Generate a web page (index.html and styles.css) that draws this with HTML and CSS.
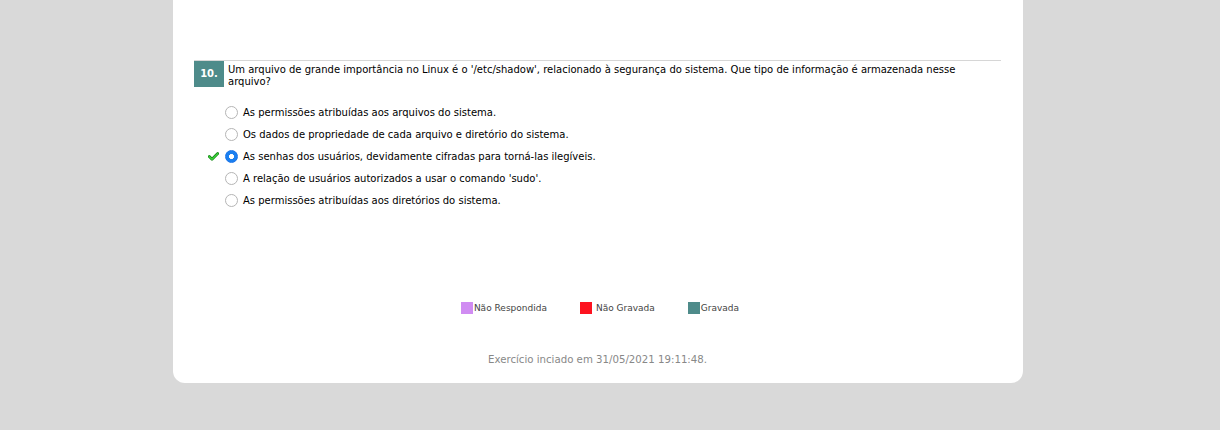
FILE: index.html
```html
<!DOCTYPE html>
<html lang="pt">
<head>
<meta charset="utf-8">
<link rel="stylesheet" href="styles.css">
</head>
<body>
<div class="card">
  <div class="question">
    <div class="q-head">
      <span class="q-num">10.</span>
      <p class="q-text">Um arquivo de grande importância no Linux é o '/etc/shadow', relacionado à segurança do sistema. Que tipo de informação é armazenada nesse arquivo?</p>
    </div>
    <ul class="options">
      <li class="opt"><span class="mark"></span><span class="radio"></span><span>As permissões atribuídas aos arquivos do sistema.</span></li>
      <li class="opt"><span class="mark"></span><span class="radio"></span><span>Os dados de propriedade de cada arquivo e diretório do sistema.</span></li>
      <li class="opt"><span class="mark"><svg width="11" height="9" viewBox="0 0 11 9"><path d="M1.3 4.6 L4 7.3 L9.7 1.6" fill="none" stroke="#178a17" stroke-width="2.8" stroke-linejoin="round" stroke-linecap="round"/><path d="M1.3 4.6 L4 7.3 L9.7 1.6" fill="none" stroke="#3fdc3f" stroke-width="1.2" stroke-linejoin="round" stroke-linecap="round"/></svg></span><span class="radio checked"></span><span>As senhas dos usuários, devidamente cifradas para torná-las ilegíveis.</span></li>
      <li class="opt"><span class="mark"></span><span class="radio"></span><span>A relação de usuários autorizados a usar o comando 'sudo'.</span></li>
      <li class="opt"><span class="mark"></span><span class="radio"></span><span>As permissões atribuídas aos diretórios do sistema.</span></li>
    </ul>
  </div>
  <div class="legend">
    <span class="leg"><span class="sw purple"></span>Não Respondida</span>
    <span class="leg"><span class="sw red"></span><span class="gap">Não Gravada</span></span>
    <span class="leg"><span class="sw teal"></span>Gravada</span>
  </div>
  <p class="footer">Exercício inciado em 31/05/2021 19:11:48.</p>
</div>
</body>
</html>
```
FILE: styles.css
```css
html, body {
  margin: 0;
  padding: 0;
  background: #d9d9d9;
  height: 430px;
  overflow: hidden;
}
body {
  font-family: "DejaVu Sans", Verdana, sans-serif;
}
.card {
  width: 850px;
  margin: 0 0 0 173px;
  height: 383px;
  background: #fff;
  border-radius: 0 0 12px 12px;
  padding: 60px 22px 0 21px;
  box-sizing: border-box;
}
.question {
  border-top: 1px solid #d6d6d6;
}
.q-head {
  display: flex;
  align-items: flex-start;
}
.q-num {
  flex: none;
  width: 30px;
  height: 26px;
  background: #4e8b8a;
  color: #fff;
  font-weight: bold;
  font-size: 10px;
  line-height: 26px;
  text-align: center;
}
.q-text {
  margin: 3px 0 0 4px;
  font-size: 10px;
  line-height: 12px;
  color: #000;
}
.options {
  list-style: none;
  margin: 13px 0 0 0;
  padding: 0;
}
.opt {
  display: flex;
  align-items: center;
  height: 22px;
  font-size: 10px;
  color: #000;
}
.mark {
  width: 18px;
  margin-left: 13px;
  display: flex;
  align-items: center;
  padding-left: 1px;
  box-sizing: border-box;
}
.radio {
  width: 11px;
  height: 11px;
  border: 1px solid #b5b5b5;
  border-radius: 50%;
  background: #fff;
  margin-right: 5px;
  box-sizing: content-box;
  flex: none;
}
.radio.checked {
  border: 1px solid #1a73e8;
  background: radial-gradient(circle, #fff 0 2.2px, #1a7ff0 2.8px);
}
.legend {
  display: flex;
  justify-content: center;
  margin-top: 91px;
  margin-left: 5px;
  font-size: 9px;
  color: #444;
  gap: 33px;
}
.leg {
  display: flex;
  align-items: center;
}
.sw {
  width: 12px;
  height: 12px;
  margin-right: 1px;
}
.gap { margin-left: 3px; }
.purple { background: #d08cf2; }
.red { background: #fd1320; }
.teal { background: #4e8b8a; }
.footer {
  margin: 40px 0 0 0;
  text-align: center;
  font-size: 10.2px;
  color: #888;
}
```
